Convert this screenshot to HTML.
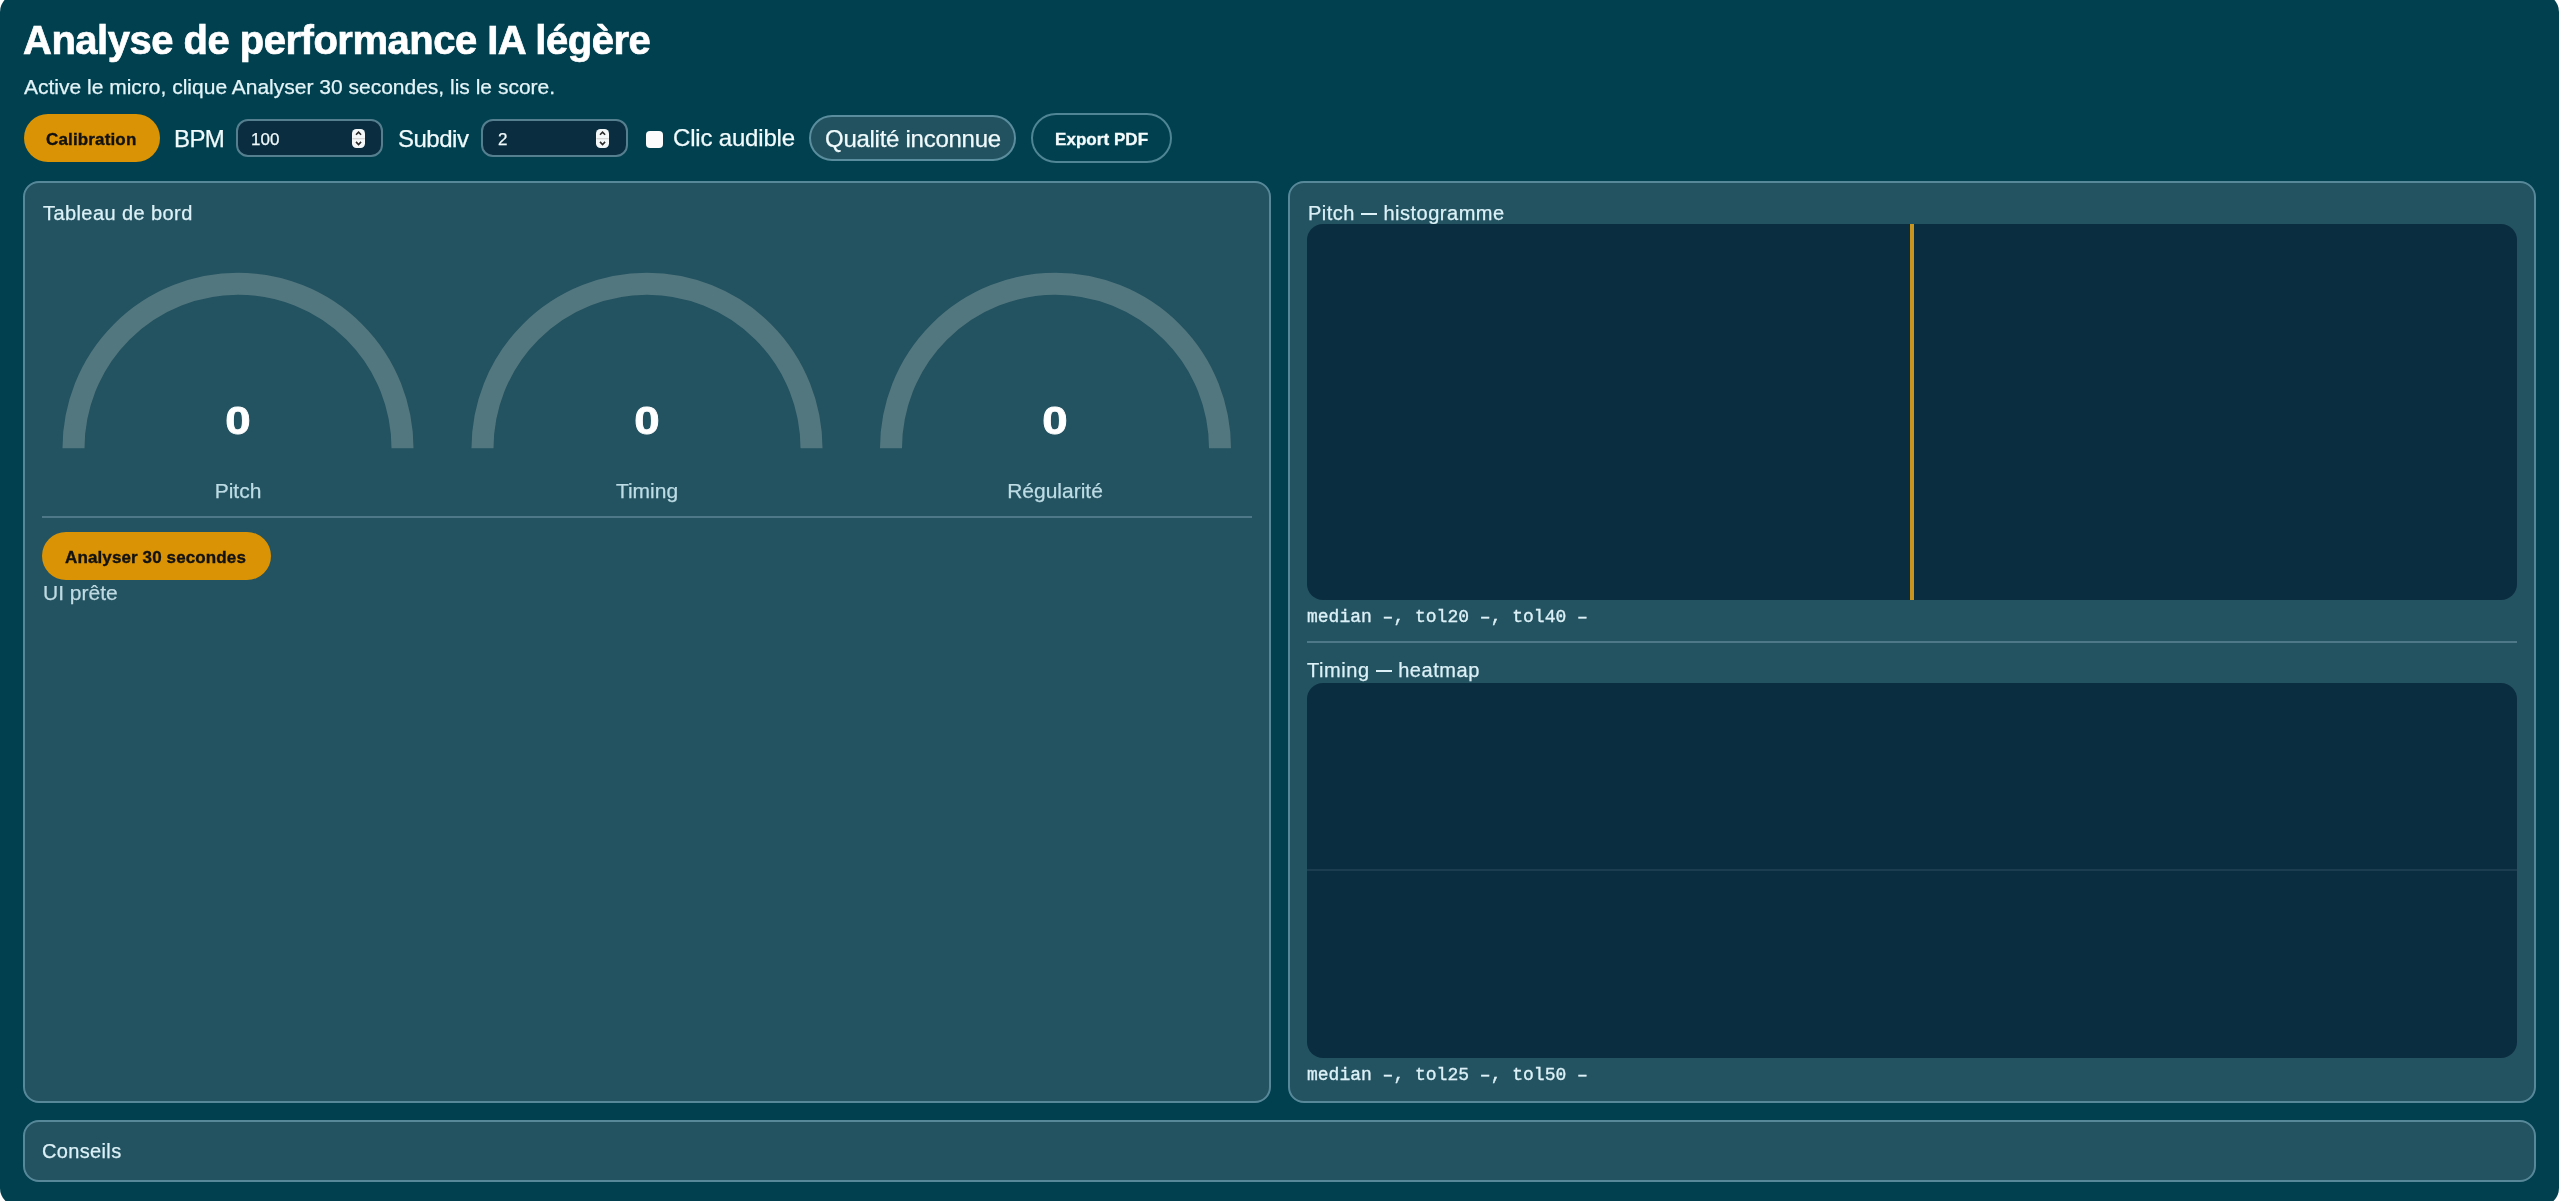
<!DOCTYPE html>
<html lang="fr">
<head>
<meta charset="utf-8">
<title>Analyse de performance IA légère</title>
<style>
html,body{margin:0;padding:0;background:#ffffff;width:2560px;height:1201px;overflow:hidden;}
body{font-family:"Liberation Sans",sans-serif;position:relative;}
.win{position:absolute;left:0;top:-6px;width:2558.5px;height:1212px;background:#01404f;border-radius:18px;overflow:hidden;}
.t{position:absolute;white-space:nowrap;line-height:1;will-change:transform;-webkit-text-stroke-width:0.25px;}
.panel{position:absolute;box-sizing:border-box;background:#235260;border:2px solid #57889a;border-radius:16px;}
.pill{position:absolute;box-sizing:border-box;border-radius:999px;}
.inp{position:absolute;box-sizing:border-box;background:#0b2d40;border:2px solid #557f8f;border-radius:12px;}
.spin{position:absolute;background:#f4f8f8;border-radius:4.5px;}
.canvas{position:absolute;background:#0b2d40;border-radius:16px;overflow:hidden;}
.mono{font-size:18px;font-family:'Liberation Mono',monospace;color:#dcf1f7;-webkit-text-stroke:0.35px #dcf1f7;}
.zero{font-size:38px;font-weight:bold;color:#ffffff;transform:scaleX(1.2);-webkit-text-stroke:0.8px #ffffff;}
.hr{position:absolute;height:2px;background:#4e7787;}
</style>
</head>
<body>
<div class="win">
  <!-- inner layer: compensates for the window being shifted up by 6px -->
  <div style="position:absolute;left:0;top:6px;width:2560px;height:1201px;">

  <div class="t" style="left:23px;top:20px;font-size:40px;font-weight:bold;color:#ffffff;letter-spacing:-0.5px;-webkit-text-stroke:0.7px #ffffff;">Analyse de performance IA légère</div>
  <div class="t" style="left:24px;top:75.5px;font-size:21px;color:#e3f4f8;">Active le micro, clique Analyser 30 secondes, lis le score.</div>

  <!-- toolbar -->
  <div class="pill" style="left:24px;top:114px;width:136px;height:48px;background:#da9304;"></div>
  <div class="t" style="left:46px;top:130.5px;font-size:17px;font-weight:bold;color:#111111;letter-spacing:0.15px;-webkit-text-stroke:0.35px #111111;">Calibration</div>

  <div class="t" style="left:173.8px;top:127px;font-size:24px;color:#f0fafc;letter-spacing:-0.6px;">BPM</div>
  <div class="inp" style="left:236px;top:119px;width:147px;height:38px;"></div>
  <div class="t" style="left:251px;top:131px;font-size:17px;color:#f0fafc;">100</div>
  <svg class="spin" style="left:351.5px;top:128.8px;" width="13.3" height="19" viewBox="0 0 13.3 19"><rect x="0.5" y="9" width="12.3" height="1.3" fill="#d6d6d6"/><path d="M4 5.7 L6.55 3.1 L9.1 5.7 M4 12.9 L6.55 15.5 L9.1 12.9" fill="none" stroke="#2a2828" stroke-width="1.6"/></svg>

  <div class="t" style="left:398px;top:127px;font-size:24px;color:#f0fafc;letter-spacing:-0.5px;">Subdiv</div>
  <div class="inp" style="left:481px;top:119px;width:147px;height:38px;"></div>
  <div class="t" style="left:498px;top:131px;font-size:17px;color:#f0fafc;">2</div>
  <svg class="spin" style="left:596px;top:128.8px;" width="13.3" height="19" viewBox="0 0 13.3 19"><rect x="0.5" y="9" width="12.3" height="1.3" fill="#d6d6d6"/><path d="M4 5.7 L6.55 3.1 L9.1 5.7 M4 12.9 L6.55 15.5 L9.1 12.9" fill="none" stroke="#2a2828" stroke-width="1.6"/></svg>

  <div style="position:absolute;left:646px;top:131px;width:17px;height:17px;background:#fbfcfb;border-radius:4px;"></div>
  <div class="t" style="left:673px;top:125.5px;font-size:24px;color:#f0fafc;letter-spacing:-0.18px;">Clic audible</div>

  <div class="pill" style="left:809px;top:115px;width:207px;height:46px;background:#22525f;border:2px solid #5a8d9d;"></div>
  <div class="t" style="left:825px;top:126.5px;font-size:24px;color:#f0fafc;letter-spacing:-0.27px;">Qualité inconnue</div>

  <div class="pill" style="left:1031px;top:113px;width:141px;height:50px;border:2px solid #4f8595;"></div>
  <div class="t" style="left:1055px;top:131px;font-size:17px;font-weight:bold;color:#f4fbfc;letter-spacing:0.05px;-webkit-text-stroke:0.35px #f4fbfc;">Export PDF</div>

  <!-- left panel -->
  <div class="panel" style="left:23px;top:181px;width:1247.5px;height:922px;"></div>
  <div class="t" style="left:42.5px;top:202.5px;font-size:20px;color:#dcf1f7;letter-spacing:0.42px;">Tableau de bord</div>

  <svg style="position:absolute;left:0;top:0;" width="1280" height="520">
    <g fill="none" stroke="#52777f" stroke-width="22">
      <path d="M 73.5 448.3 A 164.5 164.5 0 0 1 402.5 448.3"/>
      <path d="M 482.5 448.3 A 164.5 164.5 0 0 1 811.5 448.3"/>
      <path d="M 891 448.3 A 164.5 164.5 0 0 1 1220 448.3"/>
    </g>
  </svg>
  <div class="t zero" style="left:138px;top:402px;width:200px;text-align:center;">0</div>
  <div class="t zero" style="left:547px;top:402px;width:200px;text-align:center;">0</div>
  <div class="t zero" style="left:955px;top:402px;width:200px;text-align:center;">0</div>
  <div class="t" style="left:138px;top:479.5px;width:200px;text-align:center;font-size:21px;color:#bddce5;">Pitch</div>
  <div class="t" style="left:547px;top:479.5px;width:200px;text-align:center;font-size:21px;color:#bddce5;">Timing</div>
  <div class="t" style="left:955px;top:479.5px;width:200px;text-align:center;font-size:21px;color:#bddce5;">Régularité</div>

  <div class="hr" style="left:42px;top:516px;width:1210px;"></div>

  <div class="pill" style="left:42px;top:532px;width:229px;height:48px;background:#da9304;"></div>
  <div class="t" style="left:65px;top:548.5px;font-size:17px;font-weight:bold;color:#111111;letter-spacing:0.12px;-webkit-text-stroke:0.35px #111111;">Analyser 30 secondes</div>
  <div class="t" style="left:43px;top:582px;font-size:21px;color:#bfdae2;">UI prête</div>

  <!-- right panel -->
  <div class="panel" style="left:1288px;top:181px;width:1248px;height:922px;"></div>
  <div class="t" style="left:1307.5px;top:202.5px;font-size:20px;color:#dcf1f7;letter-spacing:0.5px;">Pitch <span style="display:inline-block;width:16.4px;height:1.8px;background:currentColor;vertical-align:5.2px;"></span> histogramme</div>
  <div class="canvas" style="left:1307px;top:224px;width:1209.5px;height:376px;">
    <div style="position:absolute;left:603px;top:0;width:4px;height:100%;background:#c9951f;"></div>
  </div>
  <div class="t mono" style="left:1307px;top:608px;">median –, tol20 –, tol40 –</div>

  <div class="hr" style="left:1307px;top:641px;width:1209.5px;"></div>
  <div class="t" style="left:1307px;top:659.5px;font-size:20px;color:#dcf1f7;letter-spacing:0.55px;">Timing <span style="display:inline-block;width:16.4px;height:1.8px;background:currentColor;vertical-align:5.2px;"></span> heatmap</div>
  <div class="canvas" style="left:1307px;top:682.5px;width:1209.5px;height:375px;">
    <div style="position:absolute;left:0;top:186px;width:100%;height:2px;background:#1c3d50;"></div>
  </div>
  <div class="t mono" style="left:1307px;top:1065.5px;">median –, tol25 –, tol50 –</div>

  <!-- conseils -->
  <div class="panel" style="left:23px;top:1120px;width:2513px;height:62px;"></div>
  <div class="t" style="left:42px;top:1141px;font-size:20px;color:#dcf1f7;letter-spacing:0.35px;">Conseils</div>

  </div>
</div>
</body>
</html>
